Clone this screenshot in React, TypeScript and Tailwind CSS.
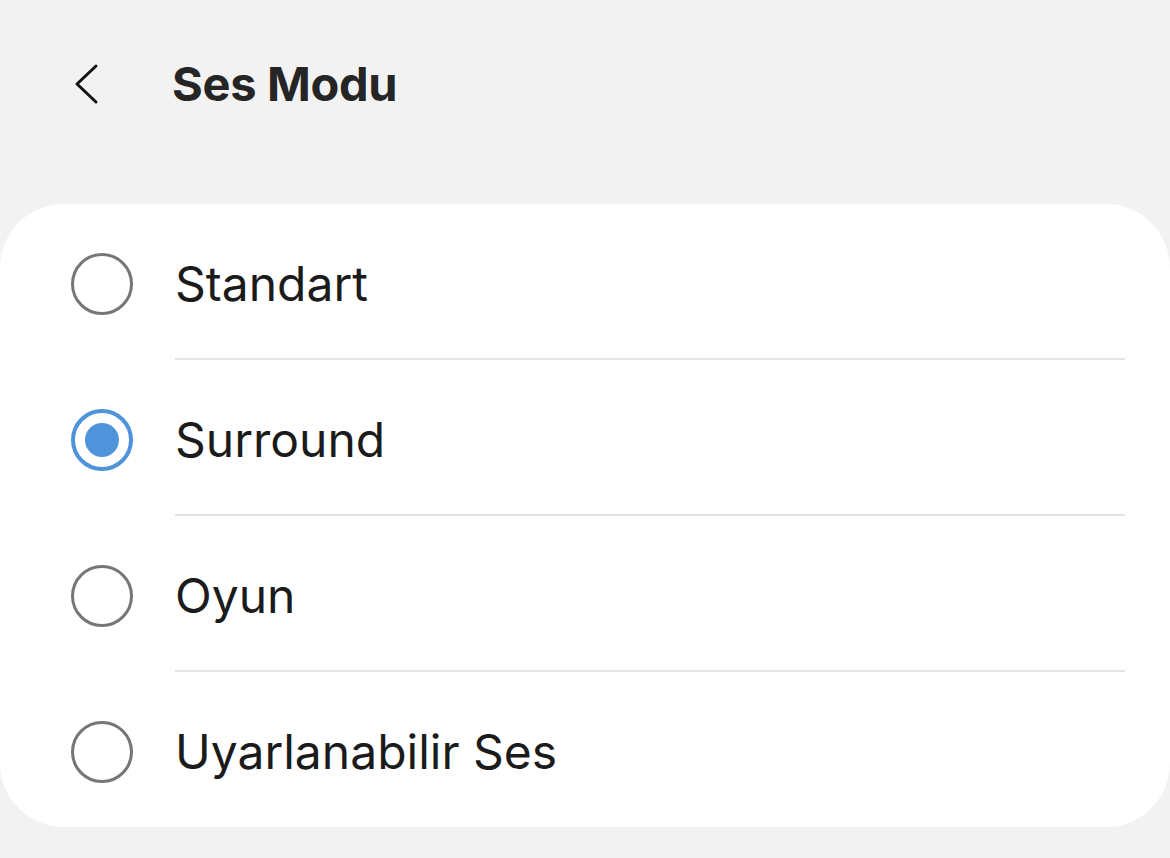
const options = ['Standart', 'Surround', 'Oyun', 'Uyarlanabilir Ses']

const Radio = ({ checked }: { checked: boolean }) =>
  checked ? (
    <div className="w-[62px] h-[62px] rounded-full border-[4px] border-[#4f94da] flex items-center justify-center">
      <div className="w-[34px] h-[34px] rounded-full bg-[#4f94da]" />
    </div>
  ) : (
    <div className="w-[62px] h-[62px] rounded-full border-[3px] border-[#767676]" />
  )

const App = () => {
  const selected = 'Surround'

  return (
    <div className="w-[1170px] h-[858px] bg-[#f2f2f2] overflow-hidden" style={{ fontFamily: 'Inter, "Noto Sans", sans-serif' }}>
      <header className="h-[204px] flex items-start pt-[54px]">
        <div className="w-[172px] h-[60px] flex items-center pl-[72px]">
          <svg width="28" height="42" viewBox="0 0 28 42" fill="none">
            <path d="M24 3 L5 21 L24 39" stroke="#111" strokeWidth="3" strokeLinecap="round" strokeLinejoin="round" />
          </svg>
        </div>
        <h1 className="h-[60px] flex items-center text-[47px] font-bold text-[#252525] tracking-[-0.3px]">Ses Modu</h1>
      </header>
      <div className="bg-white rounded-[64px] h-[623px]">
        {options.map((opt, i) => (
          <div key={opt}>
            <div className="h-[154px] flex items-center pt-[5px]">
              <div className="w-[175px] flex pl-[71px]">
                <Radio checked={opt === selected} />
              </div>
              <span className="text-[48px] text-[#1b1b1b]">{opt}</span>
            </div>
            {i < options.length - 1 && <div className="ml-[175px] mr-[45px] h-[2px] bg-[#e4e4e4]" />}
          </div>
        ))}
      </div>
    </div>
  )
}

export default App
